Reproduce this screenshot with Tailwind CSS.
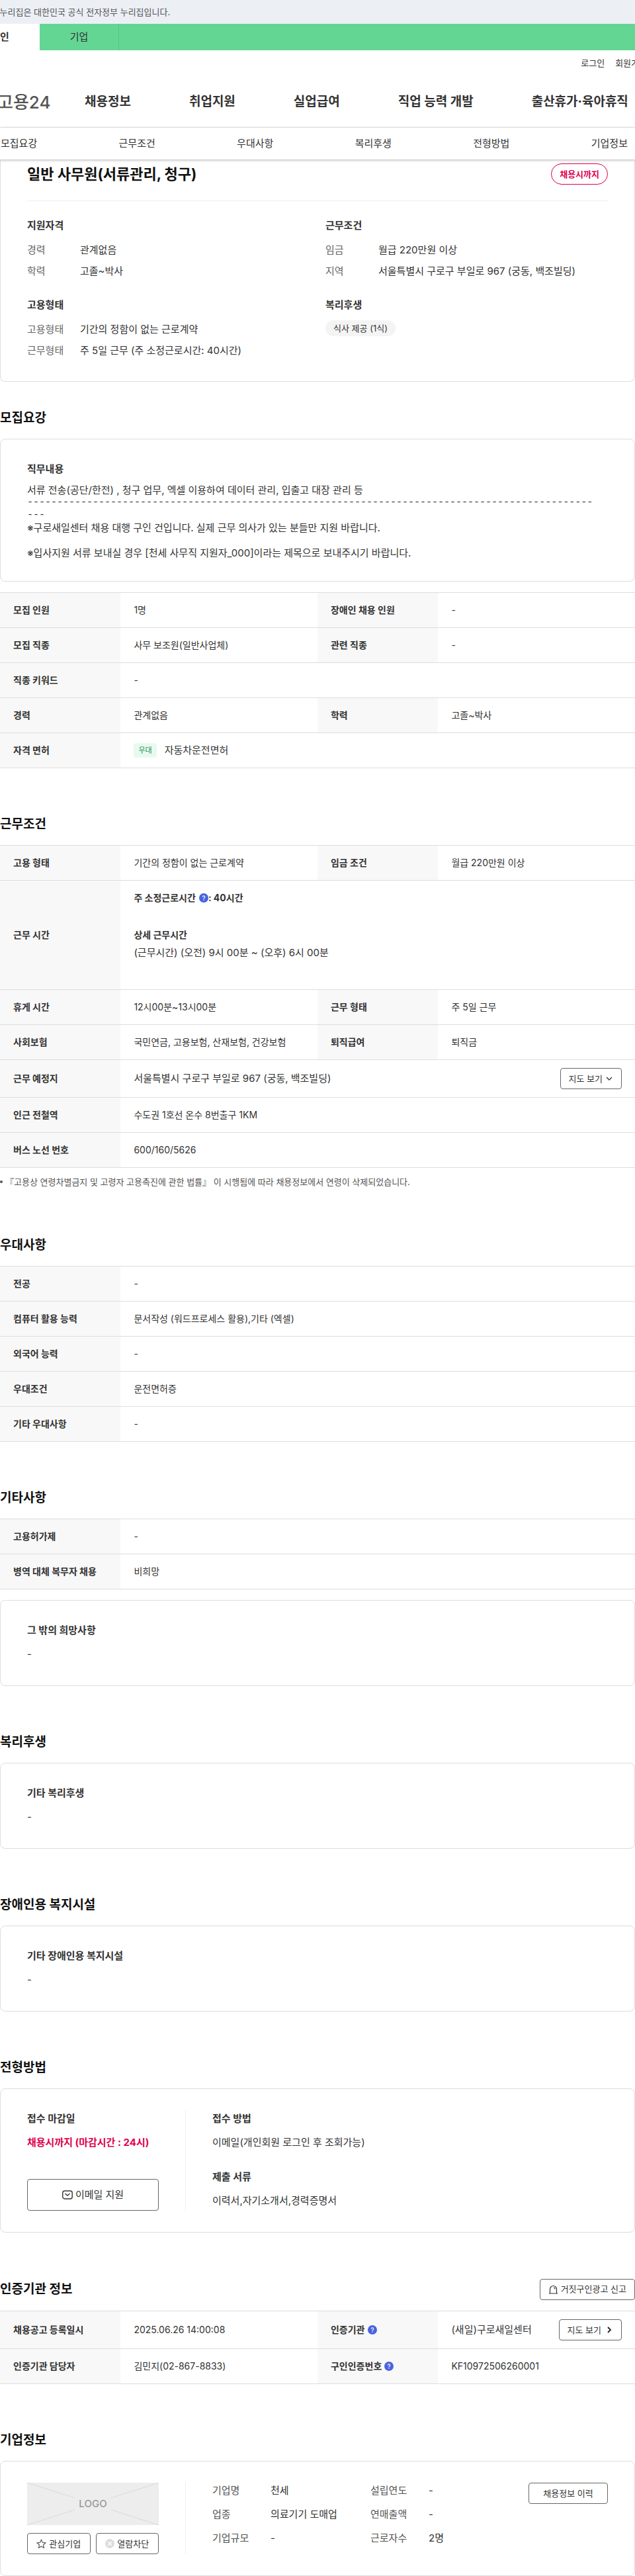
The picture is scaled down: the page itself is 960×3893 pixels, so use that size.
<!DOCTYPE html>
<html lang="ko">
<head>
    <meta charset="UTF-8">
    <meta name="viewport" content="width=device-width, initial-scale=1.0">
    <title>고용24 채용정보</title>
    <script src="https://cdn.jsdelivr.net/npm/@tailwindcss/browser@4"></script>
</head>
<body class="bg-white text-[#333] text-[15px] overflow-x-hidden font-['Inter','Noto_Sans_CJK_KR',sans-serif]">
    <div class="h-9 bg-[#ecf0f5] overflow-hidden">
        <p class="-ml-4 text-[13px] leading-9 text-[#555] whitespace-nowrap">이 누리집은 대한민국 공식 전자정부 누리집입니다.</p>
    </div>

    <header class="overflow-hidden">
        <div class="h-10 bg-[#63d694] flex">
            <a href="#" class="-ml-[60px] w-[120px] bg-white text-center leading-10 font-bold">개인</a>
            <a href="#" class="w-[120px] text-center leading-10 border-r border-[#58c587]">기업</a>
        </div>
        <div class="h-10 flex justify-end items-center gap-4 text-[13px] whitespace-nowrap -mr-[18px]">
            <a href="#">로그인</a>
            <a href="#">회원가입</a>
        </div>
        <div class="h-[77px] flex items-center border-b border-[#eee] whitespace-nowrap">
            <a href="#" class="-ml-1 w-[132px] shrink-0 text-[26px] font-medium text-[#555]">고용24</a>
            <nav class="flex gap-[88px] text-[19px] font-bold">
                <a href="#">채용정보</a>
                <a href="#">취업지원</a>
                <a href="#">실업급여</a>
                <a href="#">직업 능력 개발</a>
                <a href="#">출산휴가·육아휴직</a>
            </nav>
        </div>
    </header>
    <nav class="relative flex justify-between items-center h-12 pl-px pr-[11px] bg-white shadow-[0_1px_4px_rgba(0,0,0,0.3)]">
        <a href="#recruit">모집요강</a>
        <a href="#work">근무조건</a>
        <a href="#prefer">우대사항</a>
        <a href="#welfare">복리후생</a>
        <a href="#process">전형방법</a>
        <a href="#company">기업정보</a>
    </nav>

    <main>
        <!-- summary -->
        <section class="border border-t-0 border-[#ddd] rounded-b-lg px-10 pb-[35px]">
            <div class="flex justify-between items-center pt-[6px] pb-6 border-b border-[#eee]">
                <h1 class="text-[22px] leading-8 font-bold text-[#111]">일반 사무원(서류관리, 청구)</h1>
                <span class="h-8 px-3 rounded-full border border-[#e0004d] text-[13px] leading-[30px] font-bold text-[#e0004d]">채용시까지</span>
            </div>
            <div class="grid grid-cols-2 gap-x-6 gap-y-7 pt-[25px] leading-[22px]">
                <div>
                    <h2 class="font-bold leading-6 mb-[14px]">지원자격</h2>
                    <dl class="grid grid-cols-[80px_1fr] gap-y-[10px]">
                        <dt class="text-[#666]">경력</dt><dd>관계없음</dd>
                        <dt class="text-[#666]">학력</dt><dd>고졸~박사</dd>
                    </dl>
                </div>
                <div>
                    <h2 class="font-bold leading-6 mb-[14px]">근무조건</h2>
                    <dl class="grid grid-cols-[80px_1fr] gap-y-[10px]">
                        <dt class="text-[#666]">임금</dt><dd>월급 220만원 이상</dd>
                        <dt class="text-[#666]">지역</dt><dd>서울특별시 구로구 부일로 967 (궁동, 백조빌딩)</dd>
                    </dl>
                </div>
                <div>
                    <h2 class="font-bold leading-6 mb-[14px]">고용형태</h2>
                    <dl class="grid grid-cols-[80px_1fr] gap-y-[10px]">
                        <dt class="text-[#666]">고용형태</dt><dd>기간의 정함이 없는 근로계약</dd>
                        <dt class="text-[#666]">근무형태</dt><dd>주 5일 근무 (주 소정근로시간: 40시간)</dd>
                    </dl>
                </div>
                <div>
                    <h2 class="font-bold leading-6 mb-[11px]">복리후생</h2>
                    <span class="inline-block h-6 px-3 rounded-full bg-[#f4f4f4] text-[13px] leading-6">식사 제공 (1식)</span>
                </div>
            </div>
        </section>

        <section id="recruit" class="pt-10">
            <h2 class="mb-4 text-[19px] leading-[30px] font-bold text-[#111]">모집요강</h2>
            <div class="mb-4 border border-[#ddd] rounded-lg px-10 py-[33px]">
                <h3 class="mb-[10px] font-bold leading-6">직무내용</h3>
                <div class="leading-[19px]">
                    <p>서류 전송(공단/한전) , 청구 업무, 엑셀 이용하여 데이터 관리, 입출고 대장 관리 등</p>
                    <p class="pr-4 break-all font-['Liberation_Mono',monospace]">--------------------------------------------------------------------------------------------------</p>
                    <p class="mb-[19px]">※구로새일센터 채용 대행 구인 건입니다. 실제 근무 의사가 있는 분들만 지원 바랍니다.</p>
                    <p>※입사지원 서류 보내실 경우 [천세 사무직 지원자_000]이라는 제목으로 보내주시기 바랍니다.</p>
                </div>
            </div>
            <table class="w-full table-fixed text-left text-[14px] leading-5 border-t border-[#ddd] [&_tr]:border-b [&_tr]:border-[#ddd] [&_th]:bg-[#f8f8f8] [&_th]:px-5 [&_th]:py-4 [&_td]:px-5 [&_td]:py-4">
                <colgroup><col class="w-[19%]"><col class="w-[31%]"><col class="w-[19%]"><col class="w-[31%]"></colgroup>
                <tr><th>모집 인원</th><td>1명</td><th>장애인 채용 인원</th><td>-</td></tr>
                <tr><th>모집 직종</th><td>사무 보조원(일반사업체)</td><th>관련 직종</th><td>-</td></tr>
                <tr><th>직종 키워드</th><td colspan="3">-</td></tr>
                <tr><th>경력</th><td>관계없음</td><th>학력</th><td>고졸~박사</td></tr>
                <tr>
                    <th>자격 면허</th>
                    <td colspan="3">
                        <div class="flex items-center gap-3 h-5">
                            <span class="px-[7px] rounded bg-[#e8faef] text-[11px] leading-[22px] text-[#1f9152]">우대</span>
                            <span class="text-[15px]">자동차운전면허</span>
                        </div>
                    </td>
                </tr>
            </table>
        </section>

        <section id="work" class="pt-[70px]">
            <h2 class="mb-4 text-[19px] leading-[30px] font-bold text-[#111]">근무조건</h2>
            <table class="w-full table-fixed text-left text-[14px] leading-5 border-t border-[#ddd] [&_tr]:border-b [&_tr]:border-[#ddd] [&_th]:bg-[#f8f8f8] [&_th]:px-5 [&_th]:py-4 [&_td]:px-5 [&_td]:py-4">
                <colgroup><col class="w-[19%]"><col class="w-[31%]"><col class="w-[19%]"><col class="w-[31%]"></colgroup>
                <tr><th>고용 형태</th><td>기간의 정함이 없는 근로계약</td><th>임금 조건</th><td>월급 220만원 이상</td></tr>
                <tr>
                    <th>근무 시간</th>
                    <td colspan="3">
                        <p class="flex items-center font-bold mb-9">주 소정근로시간
                            <button type="button" aria-label="도움말" class="ml-[5px]"><svg class="size-[14px]" viewBox="0 0 14 14"><circle cx="7" cy="7" r="7" fill="#4a63e0"/><path d="M5.3 5.6a1.7 1.7 0 1 1 2.5 1.5c-.6.3-.8.6-.8 1.1" fill="none" stroke="#fff" stroke-width="1.2"/><circle cx="7" cy="10" r=".8" fill="#fff"/></svg></button>: 40시간
                        </p>
                        <p class="font-bold mb-[6px]">상세 근무시간</p>
                        <p class="text-[15px] leading-[22px] mb-7">(근무시간) (오전) 9시 00분 ~ (오후) 6시 00분</p>
                    </td>
                </tr>
                <tr><th>휴게 시간</th><td>12시00분~13시00분</td><th>근무 형태</th><td>주 5일 근무</td></tr>
                <tr><th>사회보험</th><td>국민연금, 고용보험, 산재보험, 건강보험</td><th>퇴직급여</th><td>퇴직금</td></tr>
                <tr>
                    <th>근무 예정지</th>
                    <td colspan="3">
                        <div class="-my-1 flex items-center justify-between">
                            <span class="text-[15px]">서울특별시 구로구 부일로 967 (궁동, 백조빌딩)</span>
                            <button type="button" class="h-8 px-3 flex items-center gap-1 border border-[#666] rounded text-[13px]">지도 보기
                                <svg class="size-3" viewBox="0 0 12 12" fill="none" stroke="#333" stroke-width="1.3"><path d="M2 4l4 4 4-4"/></svg>
                            </button>
                        </div>
                    </td>
                </tr>
                <tr><th>인근 전철역</th><td colspan="3">수도권 1호선 온수 8번출구 1KM</td></tr>
                <tr><th>버스 노선 번호</th><td colspan="3">600/160/5626</td></tr>
            </table>
            <div class="mt-[10px] flex items-center gap-1 text-[13px] leading-[22px] text-[#555]">
                <span class="size-1 rounded-full bg-[#555]"></span>
                <p>『고용상 연령차별금지 및 고령자 고용촉진에 관한 법률』 이 시행됨에 따라 채용정보에서 연령이 삭제되었습니다.</p>
            </div>
        </section>

        <section id="prefer" class="pt-[70px]">
            <h2 class="mb-4 text-[19px] leading-[30px] font-bold text-[#111]">우대사항</h2>
            <table class="w-full table-fixed text-left text-[14px] leading-5 border-t border-[#ddd] [&_tr]:border-b [&_tr]:border-[#ddd] [&_th]:bg-[#f8f8f8] [&_th]:px-5 [&_th]:py-4 [&_td]:px-5 [&_td]:py-4">
                <colgroup><col class="w-[19%]"><col class="w-[81%]"></colgroup>
                <tr><th>전공</th><td>-</td></tr>
                <tr><th>컴퓨터 활용 능력</th><td>문서작성 (워드프로세스 활용),기타 (엑셀)</td></tr>
                <tr><th>외국어 능력</th><td>-</td></tr>
                <tr><th>우대조건</th><td>운전면허증</td></tr>
                <tr><th>기타 우대사항</th><td>-</td></tr>
            </table>
        </section>

        <section class="pt-[70px]">
            <h2 class="mb-4 text-[19px] leading-[30px] font-bold text-[#111]">기타사항</h2>
            <table class="mb-4 w-full table-fixed text-left text-[14px] leading-5 border-t border-[#ddd] [&_tr]:border-b [&_tr]:border-[#ddd] [&_th]:bg-[#f8f8f8] [&_th]:px-5 [&_th]:py-4 [&_td]:px-5 [&_td]:py-4">
                <colgroup><col class="w-[19%]"><col class="w-[81%]"></colgroup>
                <tr><th>고용허가제</th><td>-</td></tr>
                <tr><th>병역 대체 복무자 채용</th><td>비희망</td></tr>
            </table>
            <div class="border border-[#ddd] rounded-lg px-10 pt-[33px] pb-[35px] leading-6">
                <h3 class="mb-3 font-bold">그 밖의 희망사항</h3>
                <p>-</p>
            </div>
        </section>

        <section id="welfare" class="pt-[70px]">
            <h2 class="mb-4 text-[19px] leading-[30px] font-bold text-[#111]">복리후생</h2>
            <div class="border border-[#ddd] rounded-lg px-10 pt-[33px] pb-[35px] leading-6">
                <h3 class="mb-3 font-bold">기타 복리후생</h3>
                <p>-</p>
            </div>
        </section>

        <section class="pt-[70px]">
            <h2 class="mb-4 text-[19px] leading-[30px] font-bold text-[#111]">장애인용 복지시설</h2>
            <div class="border border-[#ddd] rounded-lg px-10 pt-[33px] pb-[35px] leading-6">
                <h3 class="mb-3 font-bold">기타 장애인용 복지시설</h3>
                <p>-</p>
            </div>
        </section>

        <section id="process" class="pt-[70px]">
            <h2 class="mb-4 text-[19px] leading-[30px] font-bold text-[#111]">전형방법</h2>
            <div class="flex border border-[#ddd] rounded-lg px-10 py-8 leading-6">
                <div class="w-60 shrink-0 pr-10 pt-px border-r border-[#eee] flex flex-col justify-between">
                    <div>
                        <h3 class="font-bold mb-3">접수 마감일</h3>
                        <p class="font-bold text-[#e0004d] whitespace-nowrap">채용시까지 (마감시간 : 24시)</p>
                    </div>
                    <button type="button" class="h-12 flex items-center justify-center gap-1 border border-[#666] rounded">
                        <svg class="size-4" viewBox="0 0 16 16" fill="none" stroke="#333" stroke-width="1.4"><rect x=".8" y="2" width="14.4" height="12" rx="3"/><path d="M4.5 6L8 9l3.500-3"/></svg>이메일 지원
                    </button>
                </div>
                <div class="pl-10 pt-px pb-[3px]">
                    <h3 class="font-bold mb-3">접수 방법</h3>
                    <p class="mb-7">이메일(개인회원 로그인 후 조회가능)</p>
                    <h3 class="font-bold mb-3">제출 서류</h3>
                    <p>이력서,자기소개서,경력증명서</p>
                </div>
            </div>
        </section>

        <section class="pt-[70px]">
            <div class="mb-4 flex items-center justify-between">
                <h2 class="text-[19px] leading-[30px] font-bold text-[#111]">인증기관 정보</h2>
                <button type="button" class="h-8 px-3 flex items-center gap-1 border border-[#666] rounded text-[13px]">
                    <svg class="size-[15px]" viewBox="0 0 15 15" fill="none" stroke="#333" stroke-width="1.2"><path d="M.8 13h13.400M2.500 13V6.500a5 5 0 0 1 10 0V13M8 4.200q2 .3 2.300 2.300"/></svg>거짓구인광고 신고
                </button>
            </div>
            <table class="w-full table-fixed text-left text-[14px] leading-5 border-t border-[#ddd] [&_tr]:border-b [&_tr]:border-[#ddd] [&_th]:bg-[#f8f8f8] [&_th]:px-5 [&_th]:py-4 [&_td]:px-5 [&_td]:py-4">
                <colgroup><col class="w-[19%]"><col class="w-[31%]"><col class="w-[19%]"><col class="w-[31%]"></colgroup>
                <tr>
                    <th>채용공고 등록일시</th>
                    <td>2025.06.26 14:00:08</td>
                    <th>
                        <div class="flex items-center gap-1">인증기관
                            <button type="button" aria-label="도움말"><svg class="size-[14px]" viewBox="0 0 14 14"><circle cx="7" cy="7" r="7" fill="#4a63e0"/><path d="M5.3 5.6a1.7 1.7 0 1 1 2.5 1.5c-.6.3-.8.6-.8 1.1" fill="none" stroke="#fff" stroke-width="1.2"/><circle cx="7" cy="10" r=".8" fill="#fff"/></svg></button>
                        </div>
                    </th>
                    <td>
                        <div class="-my-1 flex items-center justify-between whitespace-nowrap">
                            <span class="text-[15px]">(새일)구로새일센터</span>
                            <button type="button" class="h-8 px-3 flex items-center gap-[6px] border border-[#666] rounded text-[13px]">지도 보기
                                <svg class="size-3" viewBox="0 0 12 12" fill="none" stroke="#222" stroke-width="1.8"><path d="M4 2l4 4-4 4"/></svg>
                            </button>
                        </div>
                    </td>
                </tr>
                <tr>
                    <th>인증기관 담당자</th>
                    <td>김민지(02-867-8833)</td>
                    <th>
                        <div class="flex items-center gap-1">구인인증번호
                            <button type="button" aria-label="도움말"><svg class="size-[14px]" viewBox="0 0 14 14"><circle cx="7" cy="7" r="7" fill="#4a63e0"/><path d="M5.3 5.6a1.7 1.7 0 1 1 2.5 1.5c-.6.3-.8.6-.8 1.1" fill="none" stroke="#fff" stroke-width="1.2"/><circle cx="7" cy="10" r=".8" fill="#fff"/></svg></button>
                        </div>
                    </th>
                    <td>KF10972506260001</td>
                </tr>
            </table>
        </section>

        <section id="company" class="pt-[70px]">
            <h2 class="mb-4 text-[19px] leading-[30px] font-bold text-[#111]">기업정보</h2>
            <div class="flex border border-[#ddd] rounded-lg px-10 py-8 leading-6">
                <div class="w-60 shrink-0 pr-10 border-r border-[#eee]">
                    <div class="relative h-16 bg-[#ededed] flex items-center justify-center">
                        <svg class="absolute inset-0 size-full" viewBox="0 0 199 64" preserveAspectRatio="none" stroke="#d9d9d9"><path d="M0 0l72 23M199 0l-72 23M0 64l72-23M199 64l-72-23"/></svg>
                        <span class="text-[15px] font-medium text-[#999]">LOGO</span>
                    </div>
                    <div class="mt-3 grid grid-cols-2 gap-2">
                        <button type="button" class="h-8 flex items-center justify-center gap-1 border border-[#666] rounded text-[13px] whitespace-nowrap">
                            <svg class="size-[15px]" viewBox="0 0 15 15" fill="none" stroke="#555" stroke-width="1.1"><path d="M7.500 1.200l1.900 4.200 4.500.5-3.400 3.100 1 4.500-4-2.300-4 2.300 1-4.500L1.100 5.900l4.500-.5z"/></svg>관심기업
                        </button>
                        <button type="button" class="h-8 flex items-center justify-center gap-1 border border-[#666] rounded text-[13px] whitespace-nowrap">
                            <svg class="size-[14px]" viewBox="0 0 14 14"><circle cx="7" cy="7" r="7" fill="#ddd"/><path d="M4.200 4.200l5.600 5.600M9.800 4.200L4.200 9.800" stroke="#fff" stroke-width="1.500"/></svg>열람차단
                        </button>
                    </div>
                </div>
                <dl class="pl-10 grid grid-cols-[88px_151px_88px_auto] gap-y-3 content-start">
                    <dt class="text-[#555]">기업명</dt><dd>천세</dd>
                    <dt class="text-[#555]">설립연도</dt><dd>-</dd>
                    <dt class="text-[#555]">업종</dt><dd>의료기기 도매업</dd>
                    <dt class="text-[#555]">연매출액</dt><dd>-</dd>
                    <dt class="text-[#555]">기업규모</dt><dd>-</dd>
                    <dt class="text-[#555]">근로자수</dt><dd>2명</dd>
                </dl>
                <button type="button" class="ml-auto w-[120px] h-8 border border-[#666] rounded text-[13px]">채용정보 이력</button>
            </div>
        </section>
    </main>
</body>
</html>
